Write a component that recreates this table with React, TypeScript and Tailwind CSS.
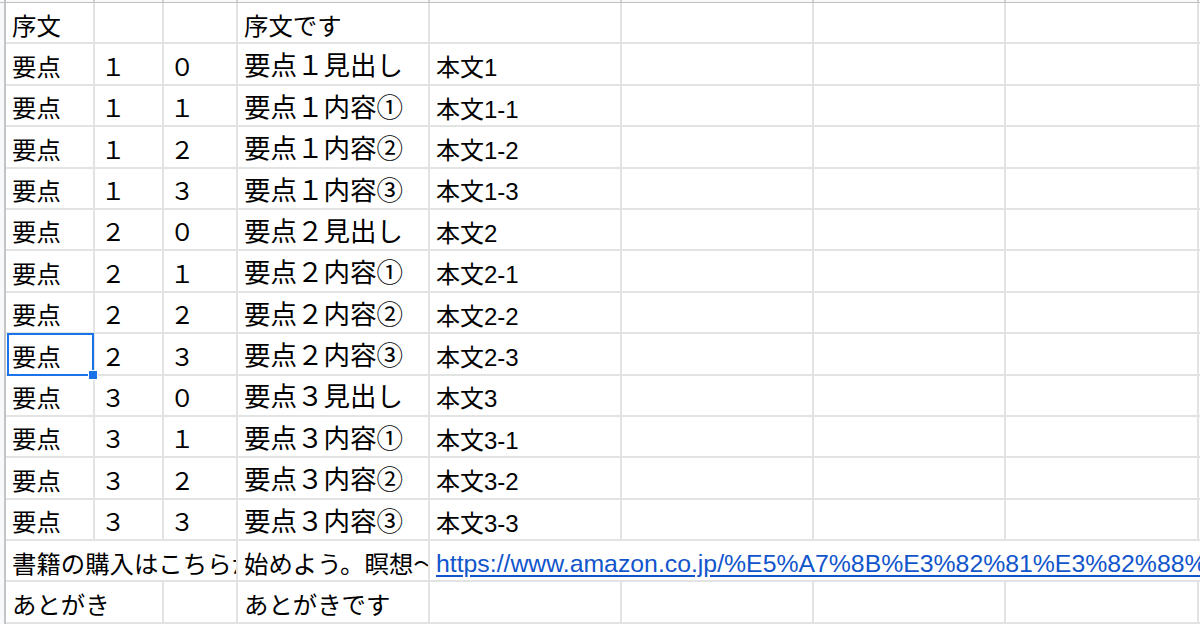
import React from 'react';

type Kind = 'cjk' | 'big' | 'latin' | 'link';

interface Cell {
  text?: string;
  span?: number;
  kind?: Kind;
}

// column widths incl. the 2px right gridline
const COLS = [89, 69, 74, 192, 192, 192, 192, 193, 120];
const FW = ['０', '１', '２', '３'];
const CIRCLE = ['', '①', '②', '③'];

const buildRows = (): Cell[][] => {
  const rows: Cell[][] = [];
  rows.push([{ text: '序文' }, {}, {}, { text: '序文です' }, {}, {}, {}, {}, {}]);
  for (let p = 1; p <= 3; p++) {
    for (let n = 0; n <= 3; n++) {
      rows.push([
        { text: '要点' },
        { text: FW[p] },
        { text: FW[n] },
        { text: n === 0 ? `要点${FW[p]}見出し` : `要点${FW[p]}内容${CIRCLE[n]}`, kind: 'big' },
        { text: n === 0 ? `本文${p}` : `本文${p}-${n}`, kind: 'latin' },
        {},
        {},
        {},
        {},
      ]);
    }
  }
  rows.push([
    { text: '書籍の購入はこちらから', span: 3 },
    { text: '始めよう。瞑想〜15分でできるココロとアタマのストレッチ〜' },
    {
      text: 'https://www.amazon.co.jp/%E5%A7%8B%E3%82%81%E3%82%88%E3%81%86%E3%80%82%E7%9E%91%E6%83%B3',
      span: 5,
      kind: 'link',
    },
  ]);
  rows.push([{ text: 'あとがき', span: 2 }, {}, { text: 'あとがきです' }, {}, {}, {}, {}, {}, {}]);
  return rows;
};

// sheets bottom-aligns text; line heights tuned so baselines sit ~7.6px above the gridline
const textClass = (kind: Kind = 'cjk') => {
  switch (kind) {
    case 'big':
      return "font-['Noto_Sans_CJK_JP',sans-serif] text-[26.5px] leading-[1.45] text-black";
    case 'latin':
      return "font-['Liberation_Sans','Noto_Sans_CJK_JP',sans-serif] text-[24px] leading-[1.3] pb-[0.4px] text-black";
    case 'link':
      return "font-['Liberation_Sans','Noto_Sans_CJK_JP',sans-serif] text-[24.8px] leading-[1.3] pb-[0.3px] text-[#1155cc] underline underline-offset-[3px]";
    default:
      return "font-['Noto_Sans_CJK_JP',sans-serif] text-[24.4px] leading-[1.45] pb-[0.5px] text-black";
  }
};

const App: React.FC = () => {
  const rows = buildRows();

  return (
    <div className="flex h-[624px] w-[1200px] flex-col overflow-hidden bg-white">
      {/* column header edge */}
      <div className="flex h-[3px] shrink-0 border-b border-[#c0c0c0] bg-[#f8f9fa]">
        <div className="h-full w-[6px] shrink-0 border-r-2 border-[#c0c0c0]" />
        {COLS.map((w, i) => (
          <div key={i} className="h-full shrink-0 border-r-2 border-[#d0d0d0]" style={{ width: w }} />
        ))}
      </div>

      <div className="flex min-h-0 flex-1">
        {/* row header edge */}
        <div className="w-[6px] shrink-0 border-r-2 border-[#c4c4c4] bg-[#f8f9fa]" />

        <div className="flex min-w-0 flex-1 flex-col">
          {rows.map((row, r) => {
            let col = 0;
            return (
              <div key={r} className="flex h-[41.4px] shrink-0 border-b-2 border-[#e2e3e3]">
                {row.map((cell, c) => {
                  const span = cell.span ?? 1;
                  const width = COLS.slice(col, col + span).reduce((a, b) => a + b, 0);
                  const start = col;
                  col += span;
                  if (width === 0) return null;
                  const selected = r === 8 && start === 0;
                  return (
                    <div
                      key={c}
                      className="relative flex h-full shrink-0 items-end border-r-2 border-[#e2e3e3]"
                      style={{ width }}
                    >
                      {cell.text && (
                        <div className={`w-full overflow-x-clip whitespace-nowrap pl-[6px] ${textClass(cell.kind)}`}>
                          {cell.text}
                        </div>
                      )}
                      {selected && (
                        <>
                          <div className="pointer-events-none absolute bottom-[-2px] left-[1px] right-[-1px] top-[-1px] z-10 border-2 border-[#1a73e8]" />
                          <div className="absolute bottom-[-6px] right-[-5px] z-20 h-[10px] w-[10px] border border-white bg-[#1a73e8]" />
                        </>
                      )}
                    </div>
                  );
                })}
              </div>
            );
          })}
        </div>
      </div>
    </div>
  );
};

export default App;
